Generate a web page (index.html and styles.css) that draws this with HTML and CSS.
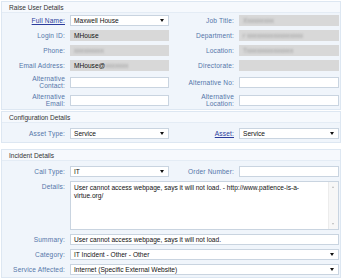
FILE: index.html
```html
<!DOCTYPE html>
<html lang="en">

<head>
    <meta charset="UTF-8">
    <title>Raise Incident</title>
    <link rel="stylesheet" href="styles.css">
</head>

<body>
    <div class="panel panel-user">
        <div class="panel-title">Raise User Details</div>
        <div class="form-grid">
            <label class="lbl"><a href="#">Full Name:</a></label>
            <div class="field select">Maxwell House<span class="arrow"></span></div>
            <label class="lbl">Job Title:</label>
            <div class="field grey"><span class="smudge">Xxxxxxxxx</span></div>

            <label class="lbl">Login ID:</label>
            <div class="field grey">MHouse</div>
            <label class="lbl">Department:</label>
            <div class="field grey"><span class="smudge">r xxxxxxxxxxxxxxxxx</span></div>

            <label class="lbl">Phone:</label>
            <div class="field grey"><span class="smudge">xxxxxxxxx</span></div>
            <label class="lbl">Location:</label>
            <div class="field grey"><span class="smudge">Txxxxxxxxxxxxxx</span></div>

            <label class="lbl">Email Address:</label>
            <div class="field grey">MHouse@<span class="smudge">xxxxxxx</span></div>
            <label class="lbl">Directorate:</label>
            <div class="field grey"></div>

            <label class="lbl two">Alternative<br>Contact:</label>
            <div class="field"></div>
            <label class="lbl">Alternative No:</label>
            <div class="field"></div>

            <label class="lbl two">Alternative<br>Email:</label>
            <div class="field"></div>
            <label class="lbl two">Alternative<br>Location:</label>
            <div class="field"></div>
        </div>
    </div>

    <div class="panel panel-config">
        <div class="panel-title">Configuration Details</div>
        <div class="form-grid">
            <label class="lbl">Asset Type:</label>
            <div class="field select">Service<span class="arrow"></span></div>
            <label class="lbl"><a href="#">Asset:</a></label>
            <div class="field select">Service<span class="arrow"></span></div>
        </div>
    </div>

    <div class="panel panel-incident">
        <div class="panel-title">Incident Details</div>
        <div class="form-grid">
            <label class="lbl">Call Type:</label>
            <div class="field select">IT<span class="arrow"></span></div>
            <label class="lbl">Order Number:</label>
            <div class="field"></div>

            <label class="lbl top">Details:</label>
            <div class="field textarea wide">
                <div class="textarea-text">User cannot access webpage, says it will not load. - http://www.patience-is-a-virtue.org/</div>
                <div class="scrollbar">
                    <span class="sb-up"></span>
                    <span class="sb-down"></span>
                </div>
            </div>

            <label class="lbl">Summary:</label>
            <div class="field wide">User cannot access webpage, says it will not load.</div>

            <label class="lbl">Category:</label>
            <div class="field select wide">IT Incident - Other - Other<span class="arrow"></span></div>

            <label class="lbl">Service Affected:</label>
            <div class="field select wide">Internet (Specific External Website)<span class="arrow"></span></div>
        </div>
    </div>
</body>

</html>
```

FILE: styles.css
```css
body {
    margin: 0;
    background: #ffffff;
    font-family: 'Liberation Sans', Arial, sans-serif;
    font-size: 6.6px;
    color: #222;
}

.panel {
    margin: 1px;
    background: #f0f5fb;
    border: 1px solid #dde7f2;
}

.panel-title {
    padding: 1px 7px 0 7px;
    height: 9px;
    line-height: 9px;
    color: #333;
    border-bottom: 1px solid #e4ecf5;
    background: #f6f9fd;
}

.form-grid {
    display: grid;
    grid-template-columns: 63px 99px 60px 100px;
    column-gap: 5px;
    row-gap: 4px;
    padding: 2px 4px 2px 0;
    align-items: center;
}

.lbl {
    text-align: right;
    color: #5576a9;
    line-height: 7px;
    letter-spacing: 0.15px;
}

.lbl a {
    color: #2b3c9c;
}

.lbl.top {
    align-self: start;
    padding-top: 2px;
}

.field {
    position: relative;
    height: 9px;
    line-height: 9px;
    padding: 0 3px;
    background: #ffffff;
    border: 1px solid #c9d4e0;
    color: #111;
    white-space: nowrap;
    overflow: hidden;
}

.field.grey {
    background: #d8d8d8;
    border-color: #d8d8d8;
}

.field.wide {
    grid-column: 2 / 5;
}

.smudge {
    color: #9a9a9a;
    filter: blur(1.2px);
}

.arrow {
    position: absolute;
    right: 4px;
    top: 3px;
    width: 0;
    height: 0;
    border-left: 2.5px solid transparent;
    border-right: 2.5px solid transparent;
    border-top: 3px solid #111;
}

.field.textarea {
    height: 47px;
    white-space: normal;
    padding: 0;
    display: flex;
}

.textarea-text {
    flex: 1;
    padding: 2px 3px;
    line-height: 8px;
}

.scrollbar {
    width: 9px;
    background: #f7f7f7;
    border-left: 1px solid #ececec;
    position: relative;
}

.sb-up,
.sb-down {
    position: absolute;
    left: 3px;
    width: 0;
    height: 0;
    border-left: 1.5px solid transparent;
    border-right: 1.5px solid transparent;
}

.sb-up {
    top: 4px;
    border-bottom: 2px solid #bbb;
}

.sb-down {
    bottom: 4px;
    border-top: 2px solid #bbb;
}

.panel-config .form-grid {
    padding-top: 5px;
    padding-bottom: 3px;
}

.panel-incident {
    margin-top: 6px;
}

.panel-incident .form-grid {
    padding-top: 5px;
}
```
